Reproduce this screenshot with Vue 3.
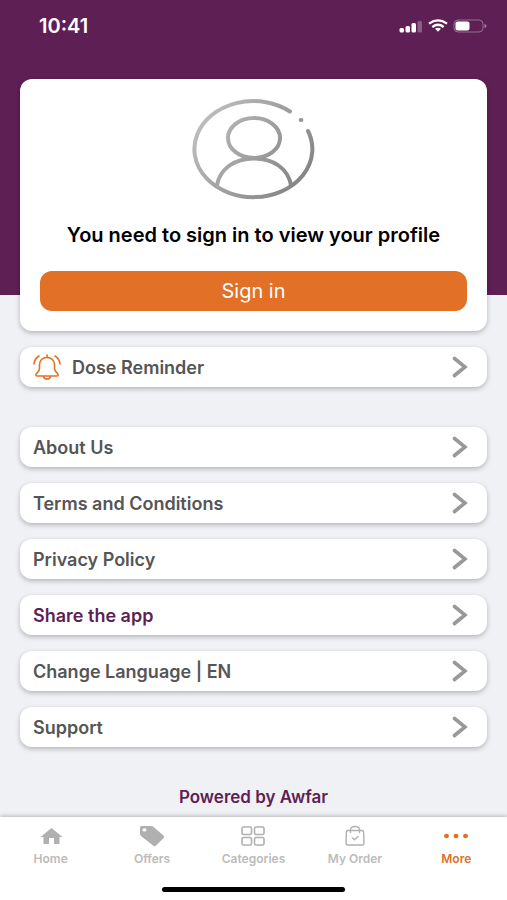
<script setup>
import { ref } from 'vue';

const links = [
  { id: 1, title: 'About Us' },
  { id: 2, title: 'Terms and Conditions' },
  { id: 3, title: 'Privacy Policy' },
  { id: 4, title: 'Share the app', accent: true },
  { id: 5, title: 'Change Language | EN' },
  { id: 6, title: 'Support' },
];
const tabs = ['Home', 'Offers', 'Categories', 'My Order', 'More'];
const activeTab = ref('More');
const selectTab = (tab) => {
  activeTab.value = tab;
};
</script>

<template>
  <div class="page">
    <header class="status-bar">
      <span class="time">10:41</span>
      <div class="status-icons">
        <svg width="24" height="14" viewBox="0 0 24 14" fill="#fff">
          <rect x="0.5" y="9" width="4.5" height="4.5" rx="1.5" />
          <rect x="6.5" y="7" width="4.5" height="6.5" rx="1.5" />
          <rect x="12.5" y="4" width="4.5" height="9.5" rx="1.5" />
          <rect x="18.5" y="2" width="4.5" height="11.5" rx="1.5" opacity="0.28" />
        </svg>
        <svg width="20" height="14" viewBox="0 0 20 14" fill="none" stroke="#fff" stroke-width="2.3">
          <path d="M1 4.6Q10 -1.8 19 4.6" />
          <path d="M4.3 8Q10 3.6 15.7 8" />
          <path d="M7 9.7Q10 7.9 13 9.7L10 12.7Z" fill="#fff" stroke="none" />
        </svg>
        <svg width="34" height="14" viewBox="0 0 34 14" fill="none">
          <rect x="1" y="1" width="29" height="12" rx="4" stroke="#fff" stroke-opacity="0.35" />
          <rect x="2.5" y="2.5" width="14" height="9" rx="2" fill="#fff" />
          <path d="M31.5 5Q33.5 5.5 33.5 7T31.5 9Z" fill="#fff" opacity="0.45" />
        </svg>
      </div>
    </header>

    <main class="content">
      <section class="profile-card">
        <svg class="avatar" width="122" height="100" viewBox="0 0 122 100" fill="none">
          <defs>
            <linearGradient id="avatarStroke" gradientUnits="userSpaceOnUse" x1="10" y1="20" x2="110" y2="90">
              <stop offset="0" stop-color="#bcbcbc" />
              <stop offset="1" stop-color="#828282" />
            </linearGradient>
          </defs>
          <g stroke="url(#avatarStroke)" stroke-width="4" stroke-linecap="round">
            <path d="M97 12.5A59 48 0 1 0 115 32" />
            <ellipse cx="61" cy="39" rx="26" ry="20" />
            <path d="M24 86C27 70 41 59.5 61 59.5S95 70 98 86" />
          </g>
          <ellipse cx="108" cy="21" rx="2.3" ry="2" fill="#949494" />
        </svg>
        <h1>You need to sign in to view your profile</h1>
        <button class="sign-in" type="button">Sign in</button>
      </section>

      <a class="row" href="#dose">
        <svg class="bell" width="28" height="26" viewBox="0 0 28 26" fill="none" stroke="#e27026" stroke-width="1.6" stroke-linecap="round" stroke-linejoin="round">
          <path d="M14 1V3.5M14 3.5C9.500 3.500 6.500 6.500 6.500 10.500V14.500C6.500 17 5 18 3.500 19.500C2.200 21 3 22 4.500 22H23.500C25 22 25.800 21 24.500 19.500C23 18 21.500 17 21.500 14.500V10.500C21.500 6.500 18.500 3.500 14 3.500Z" />
          <path d="M10.500 22.500Q11 25 14 25T17.500 22.500" />
          <path d="M6 2Q1.200 5 1 10M22 2Q26.800 5 27 10" />
        </svg>
        <span>Dose Reminder</span>
        <svg class="chevron" width="16" height="22" viewBox="0 0 16 22">
          <path d="M2.500 2.500L13 11L2.500 19.500" />
        </svg>
      </a>

      <nav class="links">
        <a v-for="link in links" :key="link.id" class="row" :class="{ accent: link.accent }" href="#">
          <span>{{ link.title }}</span>
          <svg class="chevron" width="16" height="22" viewBox="0 0 16 22">
            <path d="M2.500 2.500L13 11L2.500 19.500" />
          </svg>
        </a>
      </nav>

      <p class="powered">Powered by Awfar</p>
    </main>

    <footer class="tab-bar">
      <div class="tabs">
        <button v-for="tab in tabs" :key="tab" type="button" class="tab" :class="{ active: activeTab === tab }" @click="selectTab(tab)">
          <svg v-if="tab === 'Home'" width="26" height="22" viewBox="0 0 26 22" fill="currentColor">
            <path d="M13.500 3L24.500 12H21.500V19H16V13H11V19H5.500V12H2.500Z" />
          </svg>
          <svg v-else-if="tab === 'Offers'" width="26" height="22" viewBox="0 0 26 22" fill="currentColor" fill-rule="evenodd">
            <path d="M2.500 1H12Q13.500 1 14.500 2L24.500 10.500Q26 12 24.500 13.200L17 20.500Q15.500 21.800 14 20.500L2 11Q1 10 1 9V2.500Q1 1 2.500 1ZM5.500 3.200A2 1.700 0 1 0 5.500 6.600A2 1.700 0 1 0 5.500 3.200Z" />
          </svg>
          <svg v-else-if="tab === 'Categories'" width="26" height="22" viewBox="0 0 26 22" fill="none" stroke="currentColor" stroke-width="1.6">
            <rect x="2" y="2" width="9.5" height="7.5" rx="1.5" />
            <rect x="14.5" y="2" width="9.5" height="7.5" rx="1.5" />
            <rect x="2" y="12.500" width="9.5" height="7.500" rx="1.5" />
            <rect x="14.500" y="12.500" width="9.5" height="7.500" rx="1.5" />
          </svg>
          <svg v-else-if="tab === 'My Order'" width="26" height="22" viewBox="0 0 26 22" fill="none" stroke="currentColor" stroke-width="1.4" stroke-linecap="round" stroke-linejoin="round">
            <path d="M6 5.500H20Q21.500 5.500 21.600 7L22 18Q22 20 20 20H6Q4 20 4 18L4.400 7Q4.500 5.500 6 5.500Z" />
            <path d="M8.500 7.500V4.500Q9 1.500 13 1.500T17.500 4.500V7.500M10.500 13L12.500 14.700L16 11.500" />
          </svg>
          <svg v-else width="26" height="22" viewBox="0 0 26 22" fill="currentColor">
            <ellipse cx="3.5" cy="11" rx="2.5" ry="2.2" />
            <ellipse cx="13" cy="11" rx="2.5" ry="2.2" />
            <ellipse cx="22.5" cy="11" rx="2.5" ry="2.2" />
          </svg>
          <span class="tab-label">{{ tab }}</span>
        </button>
      </div>
      <div class="home-indicator"></div>
    </footer>
  </div>
</template>

<style>
body {
  margin: 0;
}
</style>

<style scoped>
.page {
  display: flex;
  flex-direction: column;
  min-height: 100vh;
  background: linear-gradient(#5e1f54 295px, #f0f1f5 295px);
  font-family: Inter, "Liberation Sans", sans-serif;
}
.status-bar {
  display: flex;
  align-items: center;
  justify-content: space-between;
  padding: 14px 20px 0 39px;
  height: 24px;
}
.time {
  color: #fff;
  font-size: 20px;
  font-weight: 600;
}
.status-icons {
  display: flex;
  align-items: center;
  gap: 5px;
}
.content {
  flex: 1;
  display: flex;
  flex-direction: column;
  padding: 41px 20px 8px;
}
.profile-card {
  display: flex;
  flex-direction: column;
  align-items: center;
  margin-bottom: 16px;
  padding: 20px;
  border-radius: 12px;
  background: #fff;
  box-shadow: 0 2px 5px rgba(0, 0, 0, 0.25);
}
.avatar {
  overflow: visible;
}
h1 {
  margin: 24px 0;
  font-size: 20px;
  line-height: 24px;
  font-weight: 600;
  color: #000;
}
.sign-in {
  width: 100%;
  height: 40px;
  border: none;
  border-radius: 12px;
  background: #e27026;
  color: #fff;
  font-family: inherit;
  font-size: 20px;
  cursor: pointer;
}
.row {
  display: flex;
  align-items: center;
  gap: 12px;
  height: 40px;
  padding: 0 19px 0 13px;
  border-radius: 12px;
  background: #fff;
  box-shadow: 0 2px 5px rgba(0, 0, 0, 0.25);
  color: #555;
  font-size: 18px;
  font-weight: 600;
  text-decoration: none;
}
.row.accent {
  color: #5e1f54;
}
.bell {
  margin-right: -1px;
}
.chevron {
  margin-left: auto;
  fill: none;
  stroke: #999;
  stroke-width: 3.6;
  stroke-linecap: round;
}
.links {
  display: flex;
  flex-direction: column;
  gap: 16px;
  margin-top: 40px;
}
.powered {
  margin: 40px 0 0;
  text-align: center;
  color: #5e1f54;
  font-size: 17px;
  line-height: 20px;
  font-weight: 600;
}
.tab-bar {
  background: #fff;
  box-shadow: 0 -1px 4px rgba(0, 0, 0, 0.25);
}
.tabs {
  display: grid;
  grid-template-columns: repeat(5, 1fr);
  padding-top: 8px;
}
.tab {
  display: flex;
  flex-direction: column;
  align-items: center;
  gap: 4px;
  padding: 0;
  border: none;
  background: none;
  color: #b0b0b0;
  font-family: inherit;
  font-size: 12px;
  line-height: 16px;
  font-weight: 600;
  cursor: pointer;
}
.tab-label {
  color: #bbb;
}
.tab.active,
.tab.active .tab-label {
  color: #e27026;
}
.home-indicator {
  width: 36%;
  height: 5px;
  margin: 20px auto 8px;
  border-radius: 3px;
  background: #000;
}
</style>
